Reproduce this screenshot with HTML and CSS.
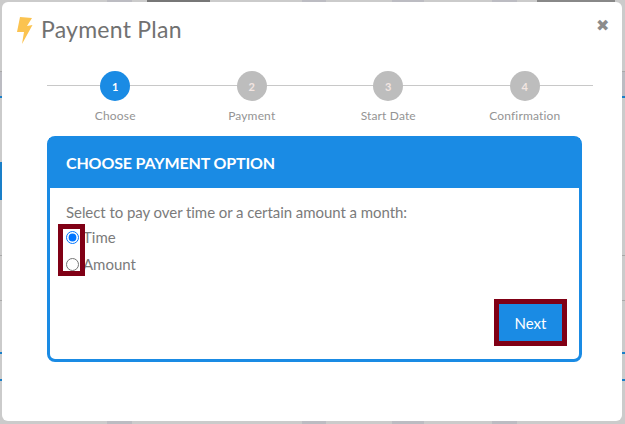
FILE: index.html
```html
<!DOCTYPE html>
<html lang="en">
<head>
    <meta charset="UTF-8">
    <title>Payment Plan</title>
    <link rel="stylesheet" href="styles.css">
</head>
<body>
    <div class="backdrop"></div>
    <div class="modal">
        <span class="modal-close">&#10006;</span>
        <div class="modal-header">
            <svg class="bolt" width="16" height="28" viewBox="0 0 16 28">
                <path d="M3 0L15 1L10 9L15.5 8L5 27L7 15H0Z" fill="#fbc350"/>
            </svg>
            <h1 class="modal-title">Payment Plan</h1>
        </div>
        <div class="steps">
            <div class="step active"><span class="step-num">1</span><span class="step-label">Choose</span></div>
            <div class="step"><span class="step-num">2</span><span class="step-label">Payment</span></div>
            <div class="step"><span class="step-num">3</span><span class="step-label">Start Date</span></div>
            <div class="step"><span class="step-num">4</span><span class="step-label">Confirmation</span></div>
        </div>
        <div class="panel">
            <div class="panel-head">CHOOSE PAYMENT OPTION</div>
            <div class="panel-body">
                <p class="panel-text">Select to pay over time or a certain amount a month:</p>
                <div class="options">
                    <span class="highlight"></span>
                    <label class="option"><input type="radio" name="plan" checked>Time</label>
                    <label class="option"><input type="radio" name="plan">Amount</label>
                </div>
                <div class="panel-actions">
                    <button class="btn-next">Next</button>
                </div>
            </div>
        </div>
    </div>
</body>
</html>
```

FILE: styles.css
```css
* {
    box-sizing: border-box;
}
html, body {
    height: 100%;
}
body {
    margin: 0;
    padding: 2px 3px 3px 2px;
    font-family: "Lato", "Liberation Sans", sans-serif;
    overflow: hidden;
}
/* the page behind the dialog, dimmed */
.backdrop {
    position: fixed;
    top: 0;
    left: 0;
    right: 0;
    bottom: 0;
    background-color: #cbcbcb;
    background-repeat: no-repeat;
    background-image:
        linear-gradient(#1a7fc8, #1a7fc8),
        linear-gradient(#1a7fc8, #1a7fc8),
        linear-gradient(#1a7fc8, #1a7fc8),
        linear-gradient(#1a7fc8, #1a7fc8),
        linear-gradient(#a9a9a9, #a9a9a9),
        linear-gradient(#a9a9a9, #a9a9a9),
        linear-gradient(#a9a9a9, #a9a9a9),
        linear-gradient(#777, #777),
        linear-gradient(#888, #888),
        linear-gradient(#bcbcc2, #bcbcc2),
        linear-gradient(#bcbcc2, #bcbcc2),
        linear-gradient(#bcbcc2, #bcbcc2),
        linear-gradient(#bcbcc2, #bcbcc2),
        linear-gradient(#bcbcc2, #bcbcc2);
    background-position:
        0 96px,
        0 352px,
        0 379px,
        0 162px,
        0 71px,
        0 255px,
        0 300px,
        147px 0,
        537px 0,
        107px 0,
        302px 0,
        392px 0,
        492px 0,
        0 71px;
    background-size:
        100% 2px,
        100% 2px,
        100% 2px,
        2px 38px,
        100% 1px,
        100% 1px,
        100% 1px,
        63px 2px,
        78px 2px,
        25px 100%,
        24px 100%,
        32px 100%,
        25px 100%,
        100% 25px;
}
.modal {
    position: relative;
    height: 419px;
    background: #fff;
    border-radius: 6px;
    padding: 0 40px 0 45px;
}
.modal-close {
    position: absolute;
    top: 14px;
    right: 13px;
    font-size: 16px;
    line-height: 18px;
    color: #8c8c8c;
}
.modal-header {
    display: flex;
    align-items: center;
    gap: 8px;
    height: 44px;
    margin-left: -30px;
    padding-top: 13px;
}
.modal-title {
    margin: -4px 0 0;
    font-size: 23px;
    font-weight: 400;
    letter-spacing: .25px;
    color: #717171;
}
.steps {
    display: grid;
    grid-template-columns: repeat(4, 1fr);
    margin: 25px -11px 0 0;
    background: linear-gradient(#c8c8c8, #c8c8c8) no-repeat 0 14px / 100% 1px;
}
.step {
    display: flex;
    flex-direction: column;
    align-items: center;
}
.step-num {
    width: 30px;
    height: 30px;
    border-radius: 50%;
    background: #bdbdbd;
    color: #f3e6e2;
    font-size: 11px;
    font-weight: 700;
    display: flex;
    align-items: center;
    justify-content: center;
}
.step.active .step-num {
    background: #1a8be4;
    color: #fff;
}
.step-label {
    margin-top: 7px;
    font-size: 12px;
    line-height: 16px;
    letter-spacing: .15px;
    color: #949494;
}
.panel {
    margin-top: 12px;
    border: 3px solid #1a8be4;
    border-radius: 8px;
    height: 226px;
}
.panel-head {
    height: 50px;
    margin: -1px -1px 0;
    padding-left: 17px;
    background: #1a8be4;
    color: #fff;
    font-size: 16px;
    font-weight: 700;
    letter-spacing: -.15px;
    line-height: 50px;
}
.panel-body {
    padding: 0 12px 0 16px;
    color: #7b7b7b;
    font-size: 15px;
}
.panel-text {
    margin: 0;
    padding-top: 16px;
    line-height: 17px;
    letter-spacing: -.06px;
}
.options {
    position: relative;
    display: flex;
    flex-direction: column;
    gap: 9px;
    margin-top: 7px;
}
.option {
    display: flex;
    align-items: center;
    height: 18px;
}
.option input {
    width: 13px;
    height: 13px;
    margin: 0 4px 0 0;
}
.highlight {
    position: absolute;
    left: -8px;
    top: -4px;
    width: 27px;
    height: 52px;
    border: 5px solid #800015;
    pointer-events: none;
}
.panel-actions {
    display: flex;
    justify-content: flex-end;
    margin-top: 26px;
}
.btn-next {
    width: 73px;
    height: 47px;
    border: 5px solid #800015;
    background: #1a8be4;
    color: #fff;
    font-family: inherit;
    font-size: 15px;
}
```
